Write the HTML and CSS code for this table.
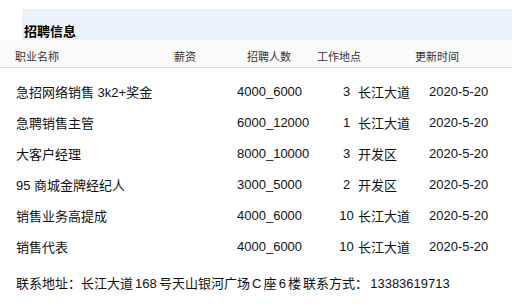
FILE: index.html
```
<!DOCTYPE html>
<html lang="zh">
<head>
<meta charset="utf-8">
<link rel="stylesheet" href="styles.css">
</head>
<body>
<div class="wrap">
  <div class="title"><h2>招聘信息</h2></div>
  <div class="thead">
    <span>职业名称</span>
    <span>薪资</span>
    <span>招聘人数</span>
    <span>工作地点</span>
    <span>更新时间</span>
  </div>
  <div class="tbody">
    <div class="row"><span>急招网络销售 3k2+奖金</span><span>4000_6000</span><span class="num">3</span><span>长江大道</span><span>2020-5-20</span></div>
    <div class="row"><span>急聘销售主管</span><span>6000_12000</span><span class="num">1</span><span>长江大道</span><span>2020-5-20</span></div>
    <div class="row"><span>大客户经理</span><span>8000_10000</span><span class="num">3</span><span>开发区</span><span>2020-5-20</span></div>
    <div class="row"><span>95 商城金牌经纪人</span><span>3000_5000</span><span class="num">2</span><span>开发区</span><span>2020-5-20</span></div>
    <div class="row"><span>销售业务高提成</span><span>4000_6000</span><span class="num">10</span><span>长江大道</span><span>2020-5-20</span></div>
    <div class="row"><span>销售代表</span><span>4000_6000</span><span class="num">10</span><span>长江大道</span><span>2020-5-20</span></div>
  </div>
  <p class="footer">联系地址：长江大道 168 号天山银河广场 C 座 6 楼 联系方式： 13383619713</p>
</div>
</body>
</html>
```
FILE: styles.css
```
* { box-sizing: border-box; }
body {
  margin: 0;
  background: #fff;
  font-family: "Liberation Sans", "Noto Sans CJK SC", sans-serif;
  color: #000;
}
.wrap { width: 512px; padding-top: 9px; }
.title {
  margin-left: 22px;
  height: 31px;
  background: #ecf2fa;
  display: flex;
  align-items: flex-end;
}
.title h2 {
  margin: 0 0 0 2px;
  font-size: 13px;
  font-weight: bold;
  line-height: 16px;
}
.thead {
  display: grid;
  grid-template-columns: 159px 73px 70px 98px 1fr;
  padding: 9px 0 0 15px;
  height: 28px;
  background: #fafafa;
  border-bottom: 1px solid #dcdcdc;
  font-size: 11px;
  line-height: 17px;
  color: #333;
}
.tbody { padding-top: 8px; }
.row {
  display: grid;
  grid-template-columns: 221px 98px 23px 71px 1fr;
  padding-left: 16px;
  height: 31px;
  align-items: center;
  font-size: 13px;
  color: #111;
}
.row .num { text-align: center; }
.footer {
  margin: 0;
  padding: 12px 0 0 16px;
  line-height: 20px;
  font-size: 13px;
  word-spacing: -1.5px;
  color: #111;
}
```
